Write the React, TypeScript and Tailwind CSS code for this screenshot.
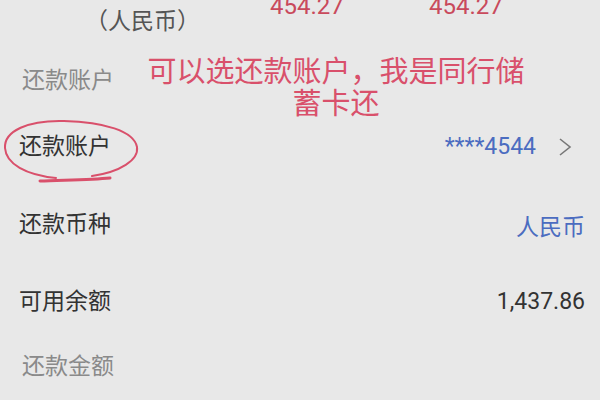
import React from 'react';

const FONT = { fontFamily: '"Roboto", "Noto Sans CJK SC", sans-serif' };

const Row: React.FC<{ label: string; h: string; children?: React.ReactNode }> = ({ label, h, children }) => (
  <div className={`flex items-center justify-between pl-[19px] pr-[15px] ${h}`}>
    <span className="text-[23px] leading-[30px] text-[#333]">{label}</span>
    {children}
  </div>
);

export default function App() {
  return (
    <div className="relative w-[600px] h-[400px] overflow-hidden bg-[#e8e8e8]" style={FONT}>
      {/* top amounts, cut off by the screenshot */}
      <div className="flex h-[40px]">
        <div className="w-[270px] pl-[85px] pt-[7px] text-[23px] leading-[30px] text-[#555]">（人民币）</div>
        <div className="w-[159px] -mt-[10px] text-[24px] leading-[32px] text-[#c94a5c]">454.27</div>
        <div className="-mt-[10px] text-[24px] leading-[32px] text-[#c94a5c]">454.27</div>
      </div>

      <div className="h-[68px] pt-[26px] pl-[22px] text-[23px] leading-[30px] text-[#8a8a8a]">还款账户</div>

      <Row label="还款账户" h="h-[78px]">
        <div className="flex items-center gap-[22px]">
          <span className="text-[23px] leading-[30px] text-[#4b6cc0]">****4544</span>
          <svg width="14" height="20" viewBox="0 0 14 20" className="mr-[13px]">
            <polyline points="2,2 12,10 2,18" fill="none" stroke="#777" strokeWidth="1.6" />
          </svg>
        </div>
      </Row>

      <Row label="还款币种" h="h-[78px]">
        <span className="text-[23px] leading-[30px] text-[#4b6cc0] mt-[6px]">人民币</span>
      </Row>

      <Row label="可用余额" h="h-[76px]">
        <span className="text-[23px] leading-[30px] text-[#333]">1,437.86</span>
      </Row>

      <div className="h-[54px] flex items-center pl-[22px] text-[23px] leading-[30px] text-[#8a8a8a]">还款金额</div>

      {/* red handwritten annotation */}
      <div className="absolute left-[145px] top-[56px] w-[382px] text-center text-[29px] leading-[32px] text-[#d9506b]">
        可以选还款账户，我是同行储
        <br />
        蓄卡还
      </div>
      <svg className="absolute left-0 top-[110px]" width="150" height="80" viewBox="0 110 150 80">
        <path
          d="M 92 176 C 120 172, 139 160, 137 147 C 134 131, 104 122, 64 121 C 28 120, 4 131, 5 148 C 6 164, 26 175, 56 178"
          fill="none"
          stroke="#d9506b"
          strokeWidth="2"
          strokeLinecap="round"
        />
        <path d="M 40 181 C 60 180, 90 180, 110 178" fill="none" stroke="#d9506b" strokeWidth="3" strokeLinecap="round" />
      </svg>
    </div>
  );
}
